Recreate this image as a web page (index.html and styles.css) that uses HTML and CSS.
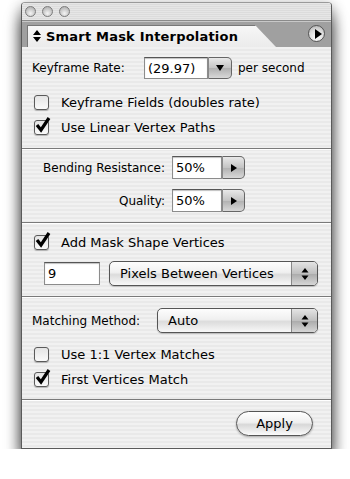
FILE: index.html
```html
<!DOCTYPE html>
<html lang="en">
<head>
  <meta charset="UTF-8">
  <title>Smart Mask Interpolation</title>
  <link rel="stylesheet" href="styles.css">
</head>
<body>
  <div class="window">
    <div class="titlebar">
      <span class="light"></span>
      <span class="light"></span>
      <span class="light"></span>
    </div>
    <div class="tabrow">
      <div class="tab">
        <svg class="updown" width="8" height="12" viewBox="0 0 8 12"><path d="M4 0 L8 5 L0 5 Z M0 7 L8 7 L4 12 Z" fill="#000"/></svg>
        <span class="tab-title">Smart Mask Interpolation</span>
      </div>
      <div class="menu-btn">
        <svg width="8" height="10" viewBox="0 0 8 10"><path d="M1 0 L8 5 L1 10 Z" fill="#000"/></svg>
      </div>
    </div>

    <div class="content">
      <!-- Keyframes -->
      <div class="section s1">
        <div class="row">
          <span class="label rate-label">Keyframe Rate:</span>
          <div class="combo">
            <span class="field rate-field">(29.97)</span>
            <span class="combo-btn rate-btn"><svg width="8" height="6" viewBox="0 0 8 6"><path d="M0 0 L8 0 L4 6 Z" fill="#000"/></svg></span>
          </div>
          <span class="label after">per second</span>
        </div>
        <label class="check-row first">
          <span class="checkbox"></span>
          <span>Keyframe Fields (doubles rate)</span>
        </label>
        <label class="check-row">
          <span class="checkbox checked"><svg width="16" height="16" viewBox="0 0 16 16"><path d="M2 8 L6 13 L14 1" fill="none" stroke="#000" stroke-width="3.2"/></svg></span>
          <span>Use Linear Vertex Paths</span>
        </label>
      </div>

      <!-- Bending / quality -->
      <div class="section s2">
        <div class="row">
          <span class="label right-label">Bending Resistance:</span>
          <div class="combo">
            <span class="field pct-field">50%</span>
            <span class="combo-btn pct-btn"><svg width="6" height="8" viewBox="0 0 6 8"><path d="M0 0 L6 4 L0 8 Z" fill="#000"/></svg></span>
          </div>
        </div>
        <div class="row second">
          <span class="label right-label">Quality:</span>
          <div class="combo">
            <span class="field pct-field">50%</span>
            <span class="combo-btn pct-btn"><svg width="6" height="8" viewBox="0 0 6 8"><path d="M0 0 L6 4 L0 8 Z" fill="#000"/></svg></span>
          </div>
        </div>
      </div>

      <!-- Vertices -->
      <div class="section s3">
        <label class="check-row">
          <span class="checkbox checked"><svg width="16" height="16" viewBox="0 0 16 16"><path d="M2 8 L6 13 L14 1" fill="none" stroke="#000" stroke-width="3.2"/></svg></span>
          <span>Add Mask Shape Vertices</span>
        </label>
        <div class="row vert-row">
          <span class="field num-field">9</span>
          <div class="popup vert-popup">
            <span class="popup-text">Pixels Between Vertices</span>
            <span class="popup-arrows"><svg width="8" height="12" viewBox="0 0 8 12"><path d="M4 0 L7.5 4.5 L0.5 4.5 Z M0.5 7.5 L7.5 7.5 L4 12 Z" fill="#000"/></svg></span>
          </div>
        </div>
      </div>

      <!-- Matching -->
      <div class="section s4">
        <div class="row">
          <span class="label match-label">Matching Method:</span>
          <div class="popup match-popup">
            <span class="popup-text">Auto</span>
            <span class="popup-arrows"><svg width="8" height="12" viewBox="0 0 8 12"><path d="M4 0 L7.5 4.5 L0.5 4.5 Z M0.5 7.5 L7.5 7.5 L4 12 Z" fill="#000"/></svg></span>
          </div>
        </div>
        <label class="check-row first">
          <span class="checkbox"></span>
          <span>Use 1:1 Vertex Matches</span>
        </label>
        <label class="check-row">
          <span class="checkbox checked"><svg width="16" height="16" viewBox="0 0 16 16"><path d="M2 8 L6 13 L14 1" fill="none" stroke="#000" stroke-width="3.2"/></svg></span>
          <span>First Vertices Match</span>
        </label>
      </div>

      <!-- Footer -->
      <div class="section s5">
        <button class="apply">Apply</button>
      </div>
    </div>
  </div>
</body>
</html>
```

FILE: styles.css
```css
/* Reset */
* {
  box-sizing: border-box;
  margin: 0;
  padding: 0;
}
body {
  background: #fff;
  font-family: "DejaVu Sans", Verdana, sans-serif;
  font-size: 12px;
  color: #000;
}
/* Window frame */
.window {
  width: 311px;
  margin: 2px 0 0 21px;
  border: 1px solid #5a5a5a;
  border-top-color: #9a9a9a;
  border-radius: 4px 4px 0 0;
  box-shadow: 0 16px 16px rgba(0, 0, 0, 0.6), 0 4px 14px rgba(0, 0, 0, 0.45);
}
.titlebar {
  height: 18px;
  display: flex;
  align-items: center;
  gap: 6px;
  padding-left: 3px;
  background: repeating-linear-gradient(#e6e6e6 0 1px, #dcdcdc 1px 2px);
  border-bottom: 1px solid #8a8a8a;
  border-radius: 3px 3px 0 0;
}
.light {
  width: 11px;
  height: 11px;
  border-radius: 50%;
  border: 1px solid #7c7c7c;
  background: radial-gradient(circle at 50% 70%, #f4f4f4 0, #c4c4c4 60%, #a8a8a8 100%);
}
.tabrow {
  height: 26px;
  display: flex;
  align-items: flex-end;
  justify-content: space-between;
  padding-left: 5px;
  background: #a0a0a0;
  border-top: 1px solid #c8c8c8;
}
.tab {
  width: 249px;
  height: 22px;
  display: flex;
  align-items: center;
  gap: 5px;
  padding-left: 6px;
  background: linear-gradient(#f7f7f7, #ebebeb);
  clip-path: polygon(0 0, 228px 0, 100% 100%, 0 100%);
  box-shadow: inset 1px 1px 0 #777;
}
.tab-title {
  font-weight: bold;
  font-size: 13px;
  letter-spacing: 0.2px;
}
.menu-btn {
  width: 17px;
  height: 17px;
  margin: 0 6px 5px 0;
  border-radius: 50%;
  border: 1px solid #555;
  background: radial-gradient(circle at 50% 75%, #ffffff 0, #dcdcdc 55%, #a8a8a8 100%);
  display: flex;
  align-items: center;
  justify-content: center;
  padding-left: 2px;
}
/* Content panel */
.content {
  background: repeating-linear-gradient(#f1f1f1 0 2px, #e9e9e9 2px 4px);
}
.section {
  border-bottom: 1px solid #7a7a7a;
}
.section + .section {
  border-top: 1px solid #fff;
}
.s1 { padding: 10px 0 9px 10px; }
.s2 { padding: 6px 0 10px 0; }
.s3 { padding: 6px 0 10px 12px; }
.s4 { padding: 10px 0 8px 10px; }
.s5 {
  padding: 10px 18px 12px 0;
  display: flex;
  justify-content: flex-end;
  border-bottom: none;
}
.row {
  display: flex;
  align-items: center;
}
.s2 .row.second { margin-top: 10px; }
.label { white-space: nowrap; }
.rate-label { width: 112px; }
.after { margin-left: 6px; }
.right-label {
  width: 143px;
  text-align: right;
  margin-right: 7px;
}
.match-label { width: 125px; }
/* Text fields and combos */
.combo { display: flex; }
.field {
  display: flex;
  align-items: center;
  height: 22px;
  padding-left: 3px;
  background: #fff;
  border: 1px solid #8c8c8c;
  border-top-color: #555;
  box-shadow: inset 0 1px 1px rgba(0, 0, 0, 0.25);
  font-size: 13px;
}
.rate-field { width: 64px; }
.pct-field { width: 50px; height: 23px; }
.num-field { width: 56px; height: 23px; margin-left: 10px; }
.combo-btn {
  display: flex;
  align-items: center;
  justify-content: center;
  height: 22px;
  border: 1px solid #666;
  border-left-color: #888;
  border-radius: 0 5px 5px 0;
  background: linear-gradient(#e8e8e8, #c4c4c4 50%, #b0b0b0 51%, #d8d8d8);
}
.rate-btn { width: 24px; }
.pct-btn { width: 23px; height: 23px; }
/* Popup menus */
.popup {
  display: flex;
  height: 25px;
  border: 1px solid #555;
  border-radius: 5px;
  background: linear-gradient(#fdfdfd, #f0f0f0 45%, #dcdcdc 55%, #f8f8f8);
  box-shadow: 0 1px 1px rgba(0, 0, 0, 0.2);
  font-size: 13px;
}
.popup-text {
  flex: 1;
  display: flex;
  align-items: center;
  padding-left: 10px;
}
.popup-arrows {
  width: 26px;
  display: flex;
  align-items: center;
  justify-content: center;
  border-left: 1px solid #888;
  border-radius: 0 4px 4px 0;
  background: linear-gradient(#e4e4e4, #c0c0c0 50%, #aaaaaa 51%, #d6d6d6);
}
.vert-row { margin-top: 7px; }
.vert-popup { width: 209px; margin-left: 9px; }
.match-popup { width: 161px; }
/* Checkboxes */
.check-row {
  display: flex;
  align-items: center;
  height: 24px;
  font-size: 13px;
}
.s1 .check-row,
.s4 .check-row { padding-left: 2px; }
.check-row.first { margin-top: 11px; }
.s4 .check-row.first { margin-top: 9px; }
.check-row + .check-row { margin-top: 1px; }
.checkbox {
  position: relative;
  width: 15px;
  height: 15px;
  margin-right: 12px;
  border: 1px solid #5a5a5a;
  border-radius: 3px;
  background: linear-gradient(#e4e4e4, #fafafa);
  box-shadow: 0 1px 1px rgba(0, 0, 0, 0.25);
}
.checkbox svg {
  position: absolute;
  left: 0;
  top: -4px;
}
/* Apply button */
.apply {
  width: 77px;
  height: 25px;
  border: 1px solid #555;
  border-radius: 13px;
  background: linear-gradient(#ffffff, #f0f0f0 45%, #d8d8d8 55%, #fbfbfb);
  box-shadow: 0 1px 2px rgba(0, 0, 0, 0.3);
  font-family: "DejaVu Sans", Verdana, sans-serif;
  font-size: 13px;
  color: #000;
}
```
